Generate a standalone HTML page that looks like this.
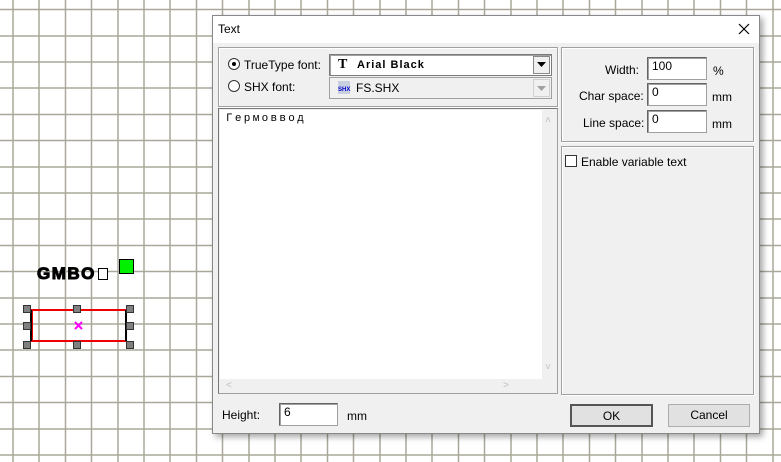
<!DOCTYPE html>
<html><head><meta charset="utf-8"><style>
*{margin:0;padding:0;box-sizing:border-box}
body{width:781px;height:462px;overflow:hidden;background:#fff;position:relative;font-family:"Liberation Sans",sans-serif;font-size:12px;color:#000}
.a{position:absolute}
.grp{position:absolute;border:1px solid #a0a0a0;box-shadow:inset 1px 1px 0 #fff,1px 1px 0 #fff}
.edit{position:absolute;background:#fff;border:1px solid #a0a0a0;border-top-color:#646464;border-left-color:#646464;box-shadow:inset 1px 1px 0 #a0a0a0;padding:1px 0 0 4px;font-size:12px}
.btn{position:absolute;background:#e1e1e1;border:1px solid #adadad;text-align:center;line-height:20px;font-size:12px}
.h{position:absolute;width:8px;height:8px;background:#808080;border:1px solid #333}
</style></head><body>
<svg class="a" style="left:0;top:0" width="781" height="462">
<g stroke="#aaa89a" stroke-width="1.5">
<line x1="13" y1="0" x2="13" y2="462"/><line x1="39" y1="0" x2="39" y2="462"/><line x1="65.5" y1="0" x2="65.5" y2="462"/><line x1="91.5" y1="0" x2="91.5" y2="462"/><line x1="118" y1="0" x2="118" y2="462"/><line x1="144" y1="0" x2="144" y2="462"/><line x1="170" y1="0" x2="170" y2="462"/><line x1="196.5" y1="0" x2="196.5" y2="462"/><line x1="222.5" y1="0" x2="222.5" y2="462"/><line x1="249" y1="0" x2="249" y2="462"/><line x1="275" y1="0" x2="275" y2="462"/><line x1="301" y1="0" x2="301" y2="462"/><line x1="327.5" y1="0" x2="327.5" y2="462"/><line x1="353.5" y1="0" x2="353.5" y2="462"/><line x1="380" y1="0" x2="380" y2="462"/><line x1="406" y1="0" x2="406" y2="462"/><line x1="432" y1="0" x2="432" y2="462"/><line x1="458.5" y1="0" x2="458.5" y2="462"/><line x1="484.5" y1="0" x2="484.5" y2="462"/><line x1="511" y1="0" x2="511" y2="462"/><line x1="537" y1="0" x2="537" y2="462"/><line x1="563" y1="0" x2="563" y2="462"/><line x1="589.5" y1="0" x2="589.5" y2="462"/><line x1="615.5" y1="0" x2="615.5" y2="462"/><line x1="642" y1="0" x2="642" y2="462"/><line x1="668" y1="0" x2="668" y2="462"/><line x1="694" y1="0" x2="694" y2="462"/><line x1="720.5" y1="0" x2="720.5" y2="462"/><line x1="746.5" y1="0" x2="746.5" y2="462"/><line x1="773" y1="0" x2="773" y2="462"/>
<line y1="9.5" x1="0" y2="9.5" x2="781"/><line y1="36" x1="0" y2="36" x2="781"/><line y1="62" x1="0" y2="62" x2="781"/><line y1="88" x1="0" y2="88" x2="781"/><line y1="114.5" x1="0" y2="114.5" x2="781"/><line y1="140.5" x1="0" y2="140.5" x2="781"/><line y1="167" x1="0" y2="167" x2="781"/><line y1="193" x1="0" y2="193" x2="781"/><line y1="219" x1="0" y2="219" x2="781"/><line y1="245.5" x1="0" y2="245.5" x2="781"/><line y1="271.5" x1="0" y2="271.5" x2="781"/><line y1="298" x1="0" y2="298" x2="781"/><line y1="324" x1="0" y2="324" x2="781"/><line y1="350" x1="0" y2="350" x2="781"/><line y1="376.5" x1="0" y2="376.5" x2="781"/><line y1="402.5" x1="0" y2="402.5" x2="781"/><line y1="429" x1="0" y2="429" x2="781"/><line y1="455" x1="0" y2="455" x2="781"/>
</g>
<rect x="32" y="310" width="94" height="31" fill="none" stroke="#e00" stroke-width="2"/>
<line x1="31" y1="310" x2="31" y2="341" stroke="#000" stroke-width="2"/><line x1="126" y1="310" x2="126" y2="341" stroke="#000" stroke-width="2"/>
<path d="M75 322l7 7M82 322l-7 7" stroke="#f0f" stroke-width="2"/>
<rect x="119.5" y="259.5" width="14" height="14" fill="#00f000" stroke="#000"/>
<rect x="98.5" y="268.5" width="9" height="11" fill="#fff" stroke="#000"/>
</svg>
<div class="a" style="left:37px;top:264px;font-family:'Liberation Sans';font-weight:900;font-size:17px;letter-spacing:1.5px;-webkit-text-stroke:1px #000">GMBO</div>
<div class="h" style="left:23px;top:305px"></div><div class="h" style="left:73px;top:305px"></div><div class="h" style="left:126px;top:305px"></div>
<div class="h" style="left:23px;top:322px"></div><div class="h" style="left:126px;top:322px"></div>
<div class="h" style="left:23px;top:341px"></div><div class="h" style="left:73px;top:341px"></div><div class="h" style="left:126px;top:341px"></div>

<div class="a" style="left:212px;top:15px;width:548px;height:419px;background:#f0f0f0;border:1px solid #888;box-shadow:3px 3px 6px rgba(0,0,0,.35)">
 <div class="a" style="left:0;top:0;width:546px;height:27px;background:#fff"></div>
 <div class="a" style="left:5px;top:6px;font-size:12px">Text</div>
 <svg class="a" style="left:525px;top:7px" width="12" height="12"><path d="M1 1l10 10M11 1L1 11" stroke="#000" stroke-width="1.2"/></svg>
</div>
<div class="grp" style="left:218px;top:47px;width:340px;height:60px"></div>
<svg class="a" style="left:228px;top:58px" width="12" height="12"><circle cx="6" cy="6" r="5.5" fill="#fff" stroke="#333"/><circle cx="6" cy="6" r="2" fill="#000"/></svg>
<div class="a" style="left:244px;top:58px">TrueType font:</div>
<svg class="a" style="left:228px;top:80px" width="12" height="12"><circle cx="6" cy="6" r="5.5" fill="#fff" stroke="#333"/></svg>
<div class="a" style="left:244px;top:80px">SHX font:</div>
<div class="a" style="left:329px;top:54px;width:223px;height:22px;background:#fff;border:1px solid #7a7a7a;box-shadow:inset 1px 1px 0 #a0a0a0"></div>
<div class="a" style="left:338px;top:57px;font-family:'Liberation Serif';font-weight:bold;font-size:14px">T</div>
<div class="a" style="left:357px;top:59px;font-weight:900;font-size:11px;letter-spacing:1px">Arial Black</div>
<div class="a" style="left:533px;top:56px;width:17px;height:18px;background:#f0f0f0;border:1px solid #888"></div>
<svg class="a" style="left:537px;top:62px" width="9" height="5"><path d="M0 0h9L4.5 5z" fill="#000"/></svg>
<div class="a" style="left:329px;top:77px;width:223px;height:22px;background:#f0f0f0;border:1px solid #a0a0a0"></div>
<div class="a" style="left:338px;top:81px;width:12px;height:13px;background:#c8d0e0;font-size:6px;color:#00c;line-height:19px;font-weight:bold">SHX</div>
<div class="a" style="left:356px;top:81px">FS.SHX</div>
<div class="a" style="left:533px;top:79px;width:17px;height:18px;border:1px solid #d0d0d0"></div>
<svg class="a" style="left:537px;top:86px" width="9" height="5"><path d="M0 0h9L4.5 5z" fill="#a0a0a0"/></svg>
<div class="a" style="left:218px;top:108px;width:340px;height:286px;border:1px solid #a0a0a0;border-top-color:#777;border-left-color:#777;background:#f0f0f0"></div>
<div class="a" style="left:220px;top:110px;width:322px;height:269px;background:#fff"></div>
<div class="a" style="left:226px;top:113px;font-family:'Liberation Mono',monospace;font-size:11px;letter-spacing:2.3px">Гермоввод</div>
<div class="a" style="left:545px;top:115px;color:#c0c0c0;font-size:10px">&#x2c4;</div>
<div class="a" style="left:545px;top:362px;color:#c0c0c0;font-size:10px">&#x2c5;</div>
<div class="a" style="left:226px;top:380px;color:#c0c0c0;font-size:10px">&lt;</div>
<div class="a" style="left:503px;top:380px;color:#c0c0c0;font-size:10px">&gt;</div>

<div class="grp" style="left:561px;top:47px;width:193px;height:95px"></div>
<div class="a" style="left:605px;top:63px">Width:</div>
<div class="a" style="left:579px;top:89px">Char space:</div>
<div class="a" style="left:583px;top:116px">Line space:</div>
<div class="edit" style="left:647px;top:57px;width:60px;height:23px">100</div>
<div class="edit" style="left:647px;top:83px;width:60px;height:23px">0</div>
<div class="edit" style="left:647px;top:110px;width:60px;height:23px">0</div>
<div class="a" style="left:713px;top:64px">%</div>
<div class="a" style="left:712px;top:90px">mm</div>
<div class="a" style="left:712px;top:117px">mm</div>
<div class="grp" style="left:561px;top:146px;width:193px;height:249px"></div>
<div class="a" style="left:565px;top:155px;width:12px;height:12px;background:#fff;border:1px solid #333"></div>
<div class="a" style="left:581px;top:155px">Enable variable text</div>

<div class="a" style="left:222px;top:408px">Height:</div>
<div class="edit" style="left:279px;top:403px;width:59px;height:23px">6</div>
<div class="a" style="left:347px;top:409px">mm</div>
<div class="btn" style="left:570px;top:404px;width:83px;height:23px;border:2px solid #555">OK</div>
<div class="btn" style="left:668px;top:404px;width:82px;height:23px">Cancel</div>
</body></html>
